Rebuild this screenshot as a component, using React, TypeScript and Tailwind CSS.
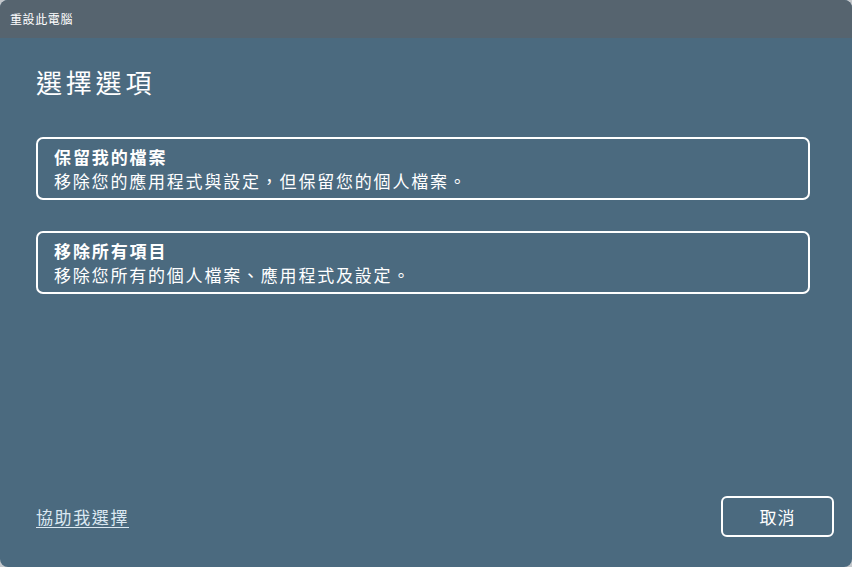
import React from "react";

const font = { fontFamily: '"Noto Sans CJK TC", "Noto Sans", sans-serif' };

function Option({ title, desc }: { title: string; desc: string }) {
  return (
    <button className="w-full text-left border-2 border-white rounded-[7px] h-[63px] pl-[16px] pr-4 flex flex-col justify-center text-white">
      <div className="text-[17px] leading-[24px] tracking-[1.9px] font-bold">{title}</div>
      <div className="text-[17px] leading-[24px] tracking-[1.8px]">{desc}</div>
    </button>
  );
}

export default function App() {
  return (
    <div className="w-[852px] h-[567px] bg-[#c3c7cb]" style={font}>
      <div className="w-full h-full rounded-[8px] overflow-hidden flex flex-col bg-[#4b6a7f]">
        <div className="h-[38px] bg-[#56646f] flex items-center pl-[10px] text-white text-[12px] tracking-[0.6px] shrink-0">
          重設此電腦
        </div>
        <div className="flex-1 flex flex-col px-[36px] pr-[42px]">
          <h1 className="text-white text-[26px] tracking-[3.8px] leading-[34px] mt-[27px] font-normal">選擇選項</h1>
          <div className="mt-[38px] flex flex-col gap-[31px]">
            <Option title="保留我的檔案" desc="移除您的應用程式與設定，但保留您的個人檔案。" />
            <Option title="移除所有項目" desc="移除您所有的個人檔案、應用程式及設定。" />
          </div>
          <div className="flex-1" />
          <div className="flex items-center justify-between mb-[30px] -mr-[24px]">
            <a href="#" className="text-[#dbe8f1] text-[17px] tracking-[1.6px] underline underline-offset-[3px]">協助我選擇</a>
            <button className="w-[113px] h-[41px] border-2 border-white rounded-[6px] text-white text-[17px] tracking-[1px]">取消</button>
          </div>
        </div>
      </div>
    </div>
  );
}
